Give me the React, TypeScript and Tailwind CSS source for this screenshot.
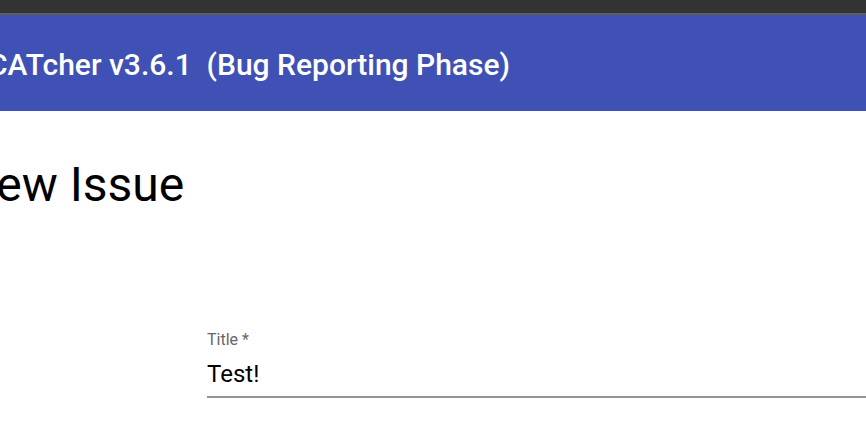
import React from 'react';

const App = () => {
  return (
    <div className="w-[866px] h-[437px] overflow-hidden bg-white font-['Roboto',sans-serif]">
      <div className="h-[13px] bg-[#333333]" />
      <div className="h-[2px] bg-[#5e5e5e]" />
      <header className="h-[96px] bg-[#3f51b5] flex items-center">
        <h2 className="-ml-[12px] pt-[3px] text-[30px] font-medium text-white whitespace-pre">
          CATcher v3.6.1  (Bug Reporting Phase)
        </h2>
      </header>
      <main className="flex flex-col">
        <h1 className="-ml-[38px] mt-[46px] text-[48px] leading-[56px] font-normal text-black">New Issue</h1>
        <div className="ml-[207px] mt-[117px] flex flex-col">
          <label className="text-[16px] leading-[20px] text-[#666666]">Title *</label>
          <input
            readOnly
            value="Test!"
            className="mt-[9px] text-[24px] leading-[30px] text-black outline-none bg-transparent"
          />
          <div className="mt-[7px] h-[2px] bg-[#949494]" />
        </div>
      </main>
    </div>
  );
};

export default App;
